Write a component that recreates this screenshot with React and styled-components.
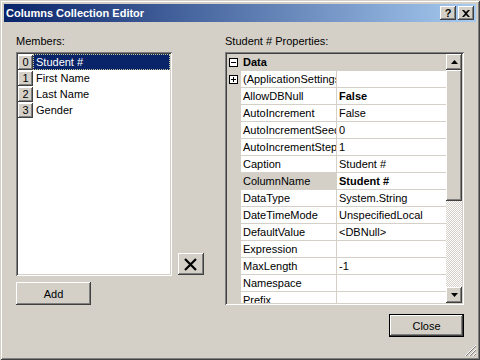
import React from 'react';
import styled, { createGlobalStyle } from 'styled-components';

const Global = createGlobalStyle`
  html, body { margin: 0; padding: 0; background: #d4d0c8; }
  body { font-family: "Liberation Sans", Arial, sans-serif; font-size: 11px; color: #000; }
  * { box-sizing: border-box; }
`;

const raised = `
  background: #d4d0c8;
  box-shadow: inset -1px -1px #404040, inset 1px 1px #ffffff, inset -2px -2px #808080, inset 2px 2px #d4d0c8;
`;

const sunken = `
  box-shadow: inset 1px 1px #808080, inset -1px -1px #ffffff, inset 2px 2px #404040, inset -2px -2px #d4d0c8;
  padding: 2px;
`;

const Window = styled.div`
  position: relative;
  width: 480px;
  height: 360px;
  background: #d4d0c8;
  padding: 4px;
  box-shadow: inset 1px 1px #d4d0c8, inset -1px -1px #404040, inset 2px 2px #ffffff, inset -2px -2px #808080;
  display: flex;
  flex-direction: column;
`;

const TitleBar = styled.div`
  height: 18px;
  background: linear-gradient(to right, #0a246a, #a6caf0);
  display: flex;
  align-items: center;
  justify-content: space-between;
  padding: 0 2px 0 2px;
`;

const Title = styled.span`
  color: #fff;
  font-weight: bold;
  font-size: 11px;
  line-height: 18px;
`;

const TitleButtons = styled.div`
  display: flex;
  gap: 2px;
`;

const TitleButton = styled.div`
  ${raised}
  width: 16px;
  height: 14px;
  display: flex;
  align-items: center;
  justify-content: center;
  font-weight: bold;
  font-size: 11px;
  line-height: 14px;
`;

const Body = styled.div`
  flex: 1;
  display: flex;
  padding: 13px 0 0 12px;
`;

const LeftCol = styled.div`
  width: 188px;
  display: flex;
  flex-direction: column;
`;

const RightCol = styled.div`
  width: 239px;
  margin-left: 21px;
  display: flex;
  flex-direction: column;
`;

const Label = styled.div`
  height: 13px;
  line-height: 13px;
  margin-bottom: 4px;
  white-space: nowrap;
`;

const ListArea = styled.div`
  display: flex;
  align-items: flex-end;
  gap: 6px;
`;

const ListBox = styled.div`
  ${sunken}
  width: 156px;
  height: 224px;
  background: #fff;
`;

const ListItem = styled.div`
  height: 16px;
  display: flex;
`;

const IndexBox = styled.div`
  ${raised}
  width: 15px;
  height: 15px;
  margin-top: 1px;
  display: flex;
  align-items: center;
  justify-content: center;
  line-height: 15px;
`;

const ItemText = styled.div`
  flex: 1;
  margin-left: 0px;
  padding-left: 3px;
  line-height: 16px;
  white-space: nowrap;
  background: ${p => (p.$selected ? '#0a246a' : 'transparent')};
  color: ${p => (p.$selected ? '#fff' : '#000')};
  outline: ${p => (p.$selected ? '1px dotted #c8c8a0' : 'none')};
  outline-offset: -1px;
`;

const Button = styled.button`
  ${raised}
  border: none;
  margin: 0;
  padding: 0;
  font-family: inherit;
  font-size: 11px;
  color: #000;
  width: ${p => p.$w || 75}px;
  height: ${p => p.$h || 23}px;
  display: flex;
  align-items: center;
  justify-content: center;
`;

const DeleteButton = styled(Button)`
  margin-bottom: 1px;
`;

const AddButton = styled(Button)`
  margin-top: 6px;
`;

const DefaultButton = styled(Button)`
  box-shadow: inset 0 0 0 1px #000, inset -2px -2px #404040, inset 2px 2px #ffffff, inset -3px -3px #808080;
  align-self: flex-end;
  margin-top: 9px;
`;

const Grid = styled.div`
  ${sunken}
  width: 239px;
  height: 253px;
  background: #d4d0c8;
  display: flex;
`;

const Rows = styled.div`
  flex: 1;
  overflow: hidden;
`;

const CategoryRow = styled.div`
  height: 17px;
  display: flex;
  align-items: center;
  background: #d4d0c8;
  font-weight: bold;
`;

const Margin = styled.div`
  width: 14px;
  height: 100%;
  flex: none;
  display: flex;
  align-items: center;
  justify-content: center;
  padding-right: 2px;
`;

const PropRow = styled.div`
  height: 17px;
  display: flex;
  background: #d4d0c8;
`;

const NameCell = styled.div`
  width: 96px;
  flex: none;
  background: ${p => (p.$selected ? '#d4d0c8' : '#fff')};
  border-right: 1px solid #d4d0c8;
  border-bottom: 1px solid #d4d0c8;
  padding-left: 2px;
  line-height: 16px;
  white-space: nowrap;
  overflow: hidden;
`;

const ValueCell = styled.div`
  flex: 1;
  background: #fff;
  border-bottom: 1px solid #d4d0c8;
  padding-left: 2px;
  line-height: 16px;
  white-space: nowrap;
  overflow: hidden;
  font-weight: ${p => (p.$bold ? 'bold' : 'normal')};
`;

const CategoryText = styled.span`
  padding-left: 2px;
  line-height: 17px;
`;

const Scrollbar = styled.div`
  width: 16px;
  flex: none;
  display: flex;
  flex-direction: column;
`;

const ScrollButton = styled.div`
  ${raised}
  width: 16px;
  height: 16px;
  flex: none;
  display: flex;
  align-items: center;
  justify-content: center;
`;

const Thumb = styled.div`
  ${raised}
  height: 131px;
  flex: none;
`;

const Track = styled.div`
  flex: 1;
  background: repeating-conic-gradient(#ffffff 0 25%, #d4d0c8 0 50%) 0 0 / 2px 2px;
`;

const Grip = styled.svg`
  position: absolute;
  right: 3px;
  bottom: 3px;
`;

const BoxIcon = ({ plus }) => (
  <svg width="9" height="9" viewBox="0 0 9 9">
    <rect x="0.5" y="0.5" width="8" height="8" fill="#fff" stroke="#000" />
    <line x1="2" y1="4.5" x2="7" y2="4.5" stroke="#000" />
    {plus && <line x1="4.5" y1="2" x2="4.5" y2="7" stroke="#000" />}
  </svg>
);

const members = ['Student #', 'First Name', 'Last Name', 'Gender'];

const props = [
  { name: '(ApplicationSettings)', value: '', plus: true },
  { name: 'AllowDBNull', value: 'False', bold: true },
  { name: 'AutoIncrement', value: 'False' },
  { name: 'AutoIncrementSeed', value: '0' },
  { name: 'AutoIncrementStep', value: '1' },
  { name: 'Caption', value: 'Student #' },
  { name: 'ColumnName', value: 'Student #', bold: true, selected: true },
  { name: 'DataType', value: 'System.String' },
  { name: 'DateTimeMode', value: 'UnspecifiedLocal' },
  { name: 'DefaultValue', value: '<DBNull>' },
  { name: 'Expression', value: '' },
  { name: 'MaxLength', value: '-1' },
  { name: 'Namespace', value: '' },
  { name: 'Prefix', value: '' },
];

export default function App() {
  return (
    <>
      <Global />
      <Window>
        <TitleBar>
          <Title>Columns Collection Editor</Title>
          <TitleButtons>
            <TitleButton>?</TitleButton>
            <TitleButton>
              <svg width="8" height="7" viewBox="0 0 8 7">
                <path d="M0 0h2l2 2 2-2h2L5 3.5 8 7H6L4 5 2 7H0l3-3.5z" fill="#000" />
              </svg>
            </TitleButton>
          </TitleButtons>
        </TitleBar>
        <Body>
          <LeftCol>
            <Label>Members:</Label>
            <ListArea>
              <ListBox>
                {members.map((m, i) => (
                  <ListItem key={m}>
                    <IndexBox>{i}</IndexBox>
                    <ItemText $selected={i === 0}>{m}</ItemText>
                  </ListItem>
                ))}
              </ListBox>
              <DeleteButton $w={26} $h={22}>
                <svg width="14" height="13" viewBox="0 0 14 13">
                  <path d="M1 1 L12 12 M12 1 L1 12" stroke="#000" strokeWidth="2.2" fill="none" />
                </svg>
              </DeleteButton>
            </ListArea>
            <AddButton>Add</AddButton>
          </LeftCol>
          <RightCol>
            <Label>Student # Properties:</Label>
            <Grid>
              <Rows>
                <CategoryRow>
                  <Margin><BoxIcon /></Margin>
                  <CategoryText>Data</CategoryText>
                </CategoryRow>
                {props.map(p => (
                  <PropRow key={p.name}>
                    <Margin>{p.plus && <BoxIcon plus />}</Margin>
                    <NameCell $selected={p.selected}>{p.name}</NameCell>
                    <ValueCell $bold={p.bold}>{p.value}</ValueCell>
                  </PropRow>
                ))}
              </Rows>
              <Scrollbar>
                <ScrollButton>
                  <svg width="7" height="4" viewBox="0 0 7 4"><path d="M3.5 0L7 4H0z" fill="#000" /></svg>
                </ScrollButton>
                <Thumb />
                <Track />
                <ScrollButton>
                  <svg width="7" height="4" viewBox="0 0 7 4"><path d="M0 0h7L3.5 4z" fill="#000" /></svg>
                </ScrollButton>
              </Scrollbar>
            </Grid>
            <DefaultButton>Close</DefaultButton>
          </RightCol>
        </Body>
        <Grip width="12" height="12" viewBox="0 0 12 12">
          <path d="M11 1L1 11M11 5L5 11M11 9L9 11" stroke="#808080" strokeWidth="1" />
          <path d="M11 0L0 11M11 4L4 11M11 8L8 11" stroke="#ffffff" strokeWidth="1" />
        </Grip>
      </Window>
    </>
  );
}
